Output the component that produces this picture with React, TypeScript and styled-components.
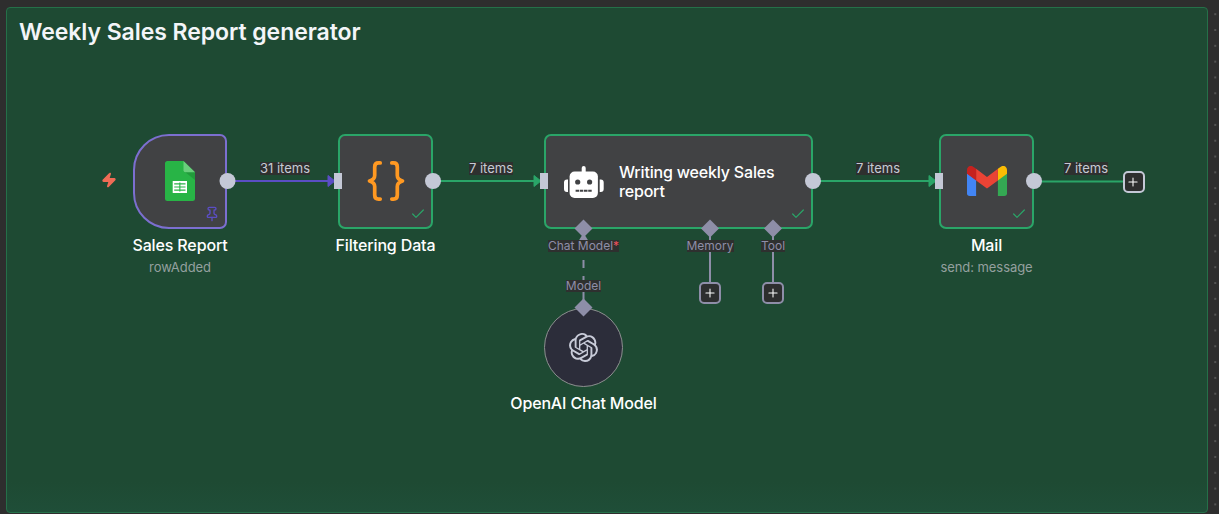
import React from "react";
import styled, { createGlobalStyle } from "styled-components";
import { SiOpenai } from "react-icons/si";
import { Check, Pin, Plus, Zap } from "lucide-react";

const GREEN = "#2aa568";
const PURPLE = "#5b4ec4";
const HANDLE = "#c4c8d6";
const MUTED = "#8e8ea8";

const GlobalStyle = createGlobalStyle`
  * { box-sizing: border-box; }
  body { margin: 0; background: #2e2e2e; overflow: hidden; }
`;

const Canvas = styled.main`
  position: relative;
  display: flex;
  width: 1219px;
  height: 514px;
  padding: 7px 11px 1px 6px;
  overflow: hidden;
  font-family: Inter, sans-serif;
  background-color: #2e2e2e;
  background-image: radial-gradient(circle at 50% 50%, #6e6e6e 0.4px, transparent 1.1px);
  background-size: 15.82px 15.82px;
  background-position: 5.6px 6.3px;
`;

const StickyNote = styled.section`
  flex: 1;
  padding: 7px 12px;
  border: 1px solid #257049;
  border-radius: 4px;
  background: linear-gradient(#1e4a33 94%, #1f4e38);
`;

const Title = styled.h1`
  margin: 0;
  font-size: 23px;
  line-height: 34px;
  font-weight: 600;
  letter-spacing: -0.06px;
  color: #f3f5f8;
`;

const Wires = styled.svg`
  position: absolute;
  inset: 0;
`;

const NodeItem = styled.article<{ $x: number; $y: number; $w: number }>`
  position: absolute;
  left: ${(p) => p.$x}px;
  top: ${(p) => p.$y}px;
  width: ${(p) => p.$w}px;
  display: flex;
  flex-direction: column;
  align-items: center;
  white-space: nowrap;
`;

const NodeBox = styled.div<{ $trigger?: boolean }>`
  position: relative;
  width: 100%;
  height: 95px;
  display: flex;
  align-items: center;
  justify-content: center;
  border: 2px solid ${(p) => (p.$trigger ? "#7c6fd0" : GREEN)};
  border-radius: ${(p) => (p.$trigger ? "36px 7px 7px 36px" : "7px")};
  background: #414244;

  > svg {
    margin-bottom: 1px;
    margin-left: ${(p) => (p.$trigger ? 0 : 1)}px;
  }
`;

const AgentBody = styled.div`
  flex: 1;
  display: flex;
  align-items: center;
  gap: 15px;
  padding-left: 18px;
`;

const AgentName = styled.div`
  width: 170px;
  font-size: 16px;
  line-height: 19px;
  font-weight: 500;
  letter-spacing: -0.18px;
  white-space: normal;
  color: #fff;
`;

const Status = styled.span<{ $pinned?: boolean }>`
  position: absolute;
  right: 5px;
  bottom: 5.5px;
  display: flex;
  color: ${(p) => (p.$pinned ? PURPLE : GREEN)};
`;

const Name = styled.div`
  margin-top: 6px;
  font-size: 16px;
  line-height: 20px;
  font-weight: 500;
  letter-spacing: -0.14px;
  color: #fff;
`;

const Detail = styled.div`
  margin-top: 3px;
  font-size: 13px;
  line-height: 18px;
  letter-spacing: -0.06px;
  color: #94a09f;
`;

const Label = styled.span<{ $muted?: boolean }>`
  height: ${(p) => (p.$muted ? 12 : 13)}px;
  line-height: ${(p) => (p.$muted ? 12 : 13)}px;
  font-size: ${(p) => (p.$muted ? 12 : 13)}px;
  white-space: nowrap;
  color: ${(p) => (p.$muted ? MUTED : "#c6cad4")};
  background: #2e302f;
`;

const Slot = styled.div<{ $x: number; $y: number; $gap?: number }>`
  position: absolute;
  left: ${(p) => p.$x - 50}px;
  top: ${(p) => p.$y}px;
  width: 100px;
  display: flex;
  flex-direction: column;
  align-items: center;
  gap: ${(p) => p.$gap ?? 0}px;
`;

const Required = styled.span`
  color: #f0525c;
`;

const AddButton = styled.button<{ $color: string }>`
  width: 22px;
  height: 22px;
  display: flex;
  align-items: center;
  justify-content: center;
  padding: 0 1px 0 0;
  border: 2px solid ${(p) => p.$color};
  border-radius: 5px;
  background: #2d2e2e;
  color: #fff;
`;

const ModelCircle = styled.div`
  width: 79px;
  height: 79px;
  display: flex;
  align-items: center;
  justify-content: center;
  padding: 0 1px 1px 0;
  border: 1.5px solid #8d8f90;
  border-radius: 50%;
  background: #2c2d3a;
  color: #c8cbd8;
`;

const TriggerBolt = styled.span`
  position: absolute;
  left: 101px;
  top: 172px;
  display: flex;
  color: #f06c56;
`;

const SheetsIcon = () => (
  <svg width="30" height="40" viewBox="0 0 30 40">
    <path d="M2.5 0H18.5L30 11.2V37.5A2.5 2.5 0 0 1 27.500 40H2.500A2.500 2.500 0 0 1 0 37.500V2.500A2.500 2.500 0 0 1 2.500 0Z" fill="#28b446" />
    <path d="M20 11L30 19V11Z" fill="#219b3b" />
    <path d="M18.500 0L30 11.200H20.500A2 2 0 0 1 18.500 9.200Z" fill="#6ace7c" />
    <path d="M7.700 20H22V32H7.700Z" fill="#fff" />
    <path d="M9.200 22.900H20.500M9.200 26H20.500M9.200 29.100H20.500M14.850 21.500V30.500" stroke="#28b446" strokeWidth="1.100" />
  </svg>
);

const BracesIcon = () => (
  <svg width="38" height="40" viewBox="0 0 38 40" fill="none" stroke="#ff9922" strokeWidth="3.700" strokeLinecap="round" strokeLinejoin="round">
    <path d="M13.200 1.900H11.500Q7.700 1.900 7.700 6V14.500Q7.700 18.500 2.500 20Q7.700 21.500 7.700 25.500V34Q7.700 38.100 11.500 38.100H13.200" />
    <path d="M24.800 1.900H26.500Q30.300 1.900 30.300 6V14.500Q30.300 18.500 35.500 20Q30.300 21.500 30.300 25.500V34Q30.300 38.100 26.500 38.100H24.800" />
  </svg>
);

const RobotIcon = () => (
  <svg width="40" height="40" viewBox="0 0 40 40">
    <rect x="17.700" y="4" width="4" height="8" rx="2" fill="#fff" />
    <rect x="5.600" y="9.500" width="28.300" height="26.500" rx="5" fill="#fff" />
    <path d="M4 17.500V30H3A3 3 0 0 1 0 27V20.500A3 3 0 0 1 3 17.500ZM35.700 17.500V30H36.700A3 3 0 0 0 39.700 27V20.500A3 3 0 0 0 36.700 17.500Z" fill="#fff" />
    <circle cx="13.700" cy="20" r="2.600" fill="#414244" />
    <circle cx="25.600" cy="20" r="2.600" fill="#414244" />
    <path d="M11.600 28.800H27.700" stroke="#414244" strokeWidth="2.100" strokeDasharray="3.500 0.700" />
  </svg>
);

const GmailIcon = () => (
  <svg width="40" height="30" viewBox="0 0 40 30">
    <path d="M0 7L9.100 14V30H2.700A2.700 2.700 0 0 1 0 27.300Z" fill="#4285f4" />
    <path d="M30.900 14L40 7V27.300A2.700 2.700 0 0 1 37.300 30H30.900Z" fill="#34a853" />
    <path d="M30.900 2.800L34.200 0.500C36.600 -1.200 40 0.600 40 4V7.700L30.900 14.400Z" fill="#fbbc04" />
    <path d="M9.100 2.700L20 10.900L30.900 2.700V14.400L20 22.600L9.100 14.400Z" fill="#ea4335" />
    <path d="M0 4C0 0.600 3.400 -1.200 5.800 0.500L9.100 2.700V14.400L0 7.700Z" fill="#c5221f" />
  </svg>
);

const outputs = [227.5, 433, 813, 1034];
const inputs = [338, 544, 939];
const ports: [number, number][] = [
  [583.5, 228.5],
  [710, 228.5],
  [773, 228.5],
  [583.5, 307.5],
];

const Connections = () => (
  <Wires width="1219" height="514" fill="none" strokeWidth="2">
    <path d="M227 181H330" stroke={PURPLE} />
    <path d="M433 181H536M813 181H931" stroke={GREEN} />
    <path d="M1034 181.500H1124" stroke={GREEN} />
    <path d="M710 229V283M773 229V283" stroke={MUTED} />
    <path d="M583.500 308V276M583.500 268V260M583.500 252V236" stroke={MUTED} />
    <path d="M583.500 233L578.500 241H588.500Z" fill={MUTED} stroke="none" />
  </Wires>
);

const Handles = () => (
  <Wires width="1219" height="514">
    {inputs.map((x, i) => (
      <g key={x}>
        <path
          d={`M${x - 10} 175.500L${x - 3} 181L${x - 10} 186.500Z`}
          fill={i ? GREEN : PURPLE}
          stroke={i ? GREEN : PURPLE}
          strokeLinejoin="round"
        />
        <path d={`M${x - 4} 173H${x + 4}V189H${x - 4}Z`} fill={HANDLE} />
      </g>
    ))}
    {outputs.map((x) => (
      <circle key={x} cx={x} cy="181" r="8" fill={HANDLE} />
    ))}
    {ports.map(([x, y]) => (
      <path key={`${x}-${y}`} d={`M${x} ${y - 9}L${x + 9} ${y}L${x} ${y + 9}L${x - 9} ${y}Z`} fill={MUTED} />
    ))}
  </Wires>
);

const Done = () => (
  <Status>
    <Check size={16} strokeWidth={1.8} />
  </Status>
);

const Add = ({ color }: { color: string }) => (
  <AddButton $color={color}>
    <Plus size={14} strokeWidth={1.8} />
  </AddButton>
);

const itemCounts = [
  { x: 285, text: "31 items" },
  { x: 491, text: "7 items" },
  { x: 878, text: "7 items" },
  { x: 1086, text: "7 items" },
];

export default function App() {
  return (
    <>
      <GlobalStyle />
      <Canvas>
        <StickyNote>
          <Title>Weekly Sales Report generator</Title>
        </StickyNote>

        <Connections />

        <TriggerBolt>
          <Zap size={16} fill="currentColor" />
        </TriggerBolt>

        <NodeItem $x={133} $y={134} $w={94}>
          <NodeBox $trigger>
            <SheetsIcon />
            <Status $pinned>
              <Pin size={16} strokeWidth={2} />
            </Status>
          </NodeBox>
          <Name>Sales Report</Name>
          <Detail>rowAdded</Detail>
        </NodeItem>
        <NodeItem $x={338} $y={134} $w={95}>
          <NodeBox>
            <BracesIcon />
            <Done />
          </NodeBox>
          <Name>Filtering Data</Name>
        </NodeItem>
        <NodeItem $x={544} $y={134} $w={269}>
          <NodeBox>
            <AgentBody>
              <RobotIcon />
              <AgentName>Writing weekly Sales report</AgentName>
            </AgentBody>
            <Done />
          </NodeBox>
        </NodeItem>
        <NodeItem $x={939} $y={134} $w={95}>
          <NodeBox>
            <GmailIcon />
            <Done />
          </NodeBox>
          <Name>Mail</Name>
          <Detail>send: message</Detail>
        </NodeItem>
        <NodeItem $x={544} $y={308} $w={79}>
          <ModelCircle>
            <SiOpenai size={29} />
          </ModelCircle>
          <Name>OpenAI Chat Model</Name>
        </NodeItem>

        <Handles />

        {itemCounts.map(({ x, text }) => (
          <Slot key={x} $x={x} $y={162}>
            <Label>{text}</Label>
          </Slot>
        ))}
        <Slot $x={583.5} $y={240} $gap={28}>
          <Label $muted>
            Chat Model<Required>*</Required>
          </Label>
          <Label $muted>Model</Label>
        </Slot>
        <Slot $x={710} $y={240} $gap={30}>
          <Label $muted>Memory</Label>
          <Add color={MUTED} />
        </Slot>
        <Slot $x={773} $y={240} $gap={30}>
          <Label $muted>Tool</Label>
          <Add color={MUTED} />
        </Slot>
        <Slot $x={1133.5} $y={171}>
          <Add color={HANDLE} />
        </Slot>
      </Canvas>
    </>
  );
}
